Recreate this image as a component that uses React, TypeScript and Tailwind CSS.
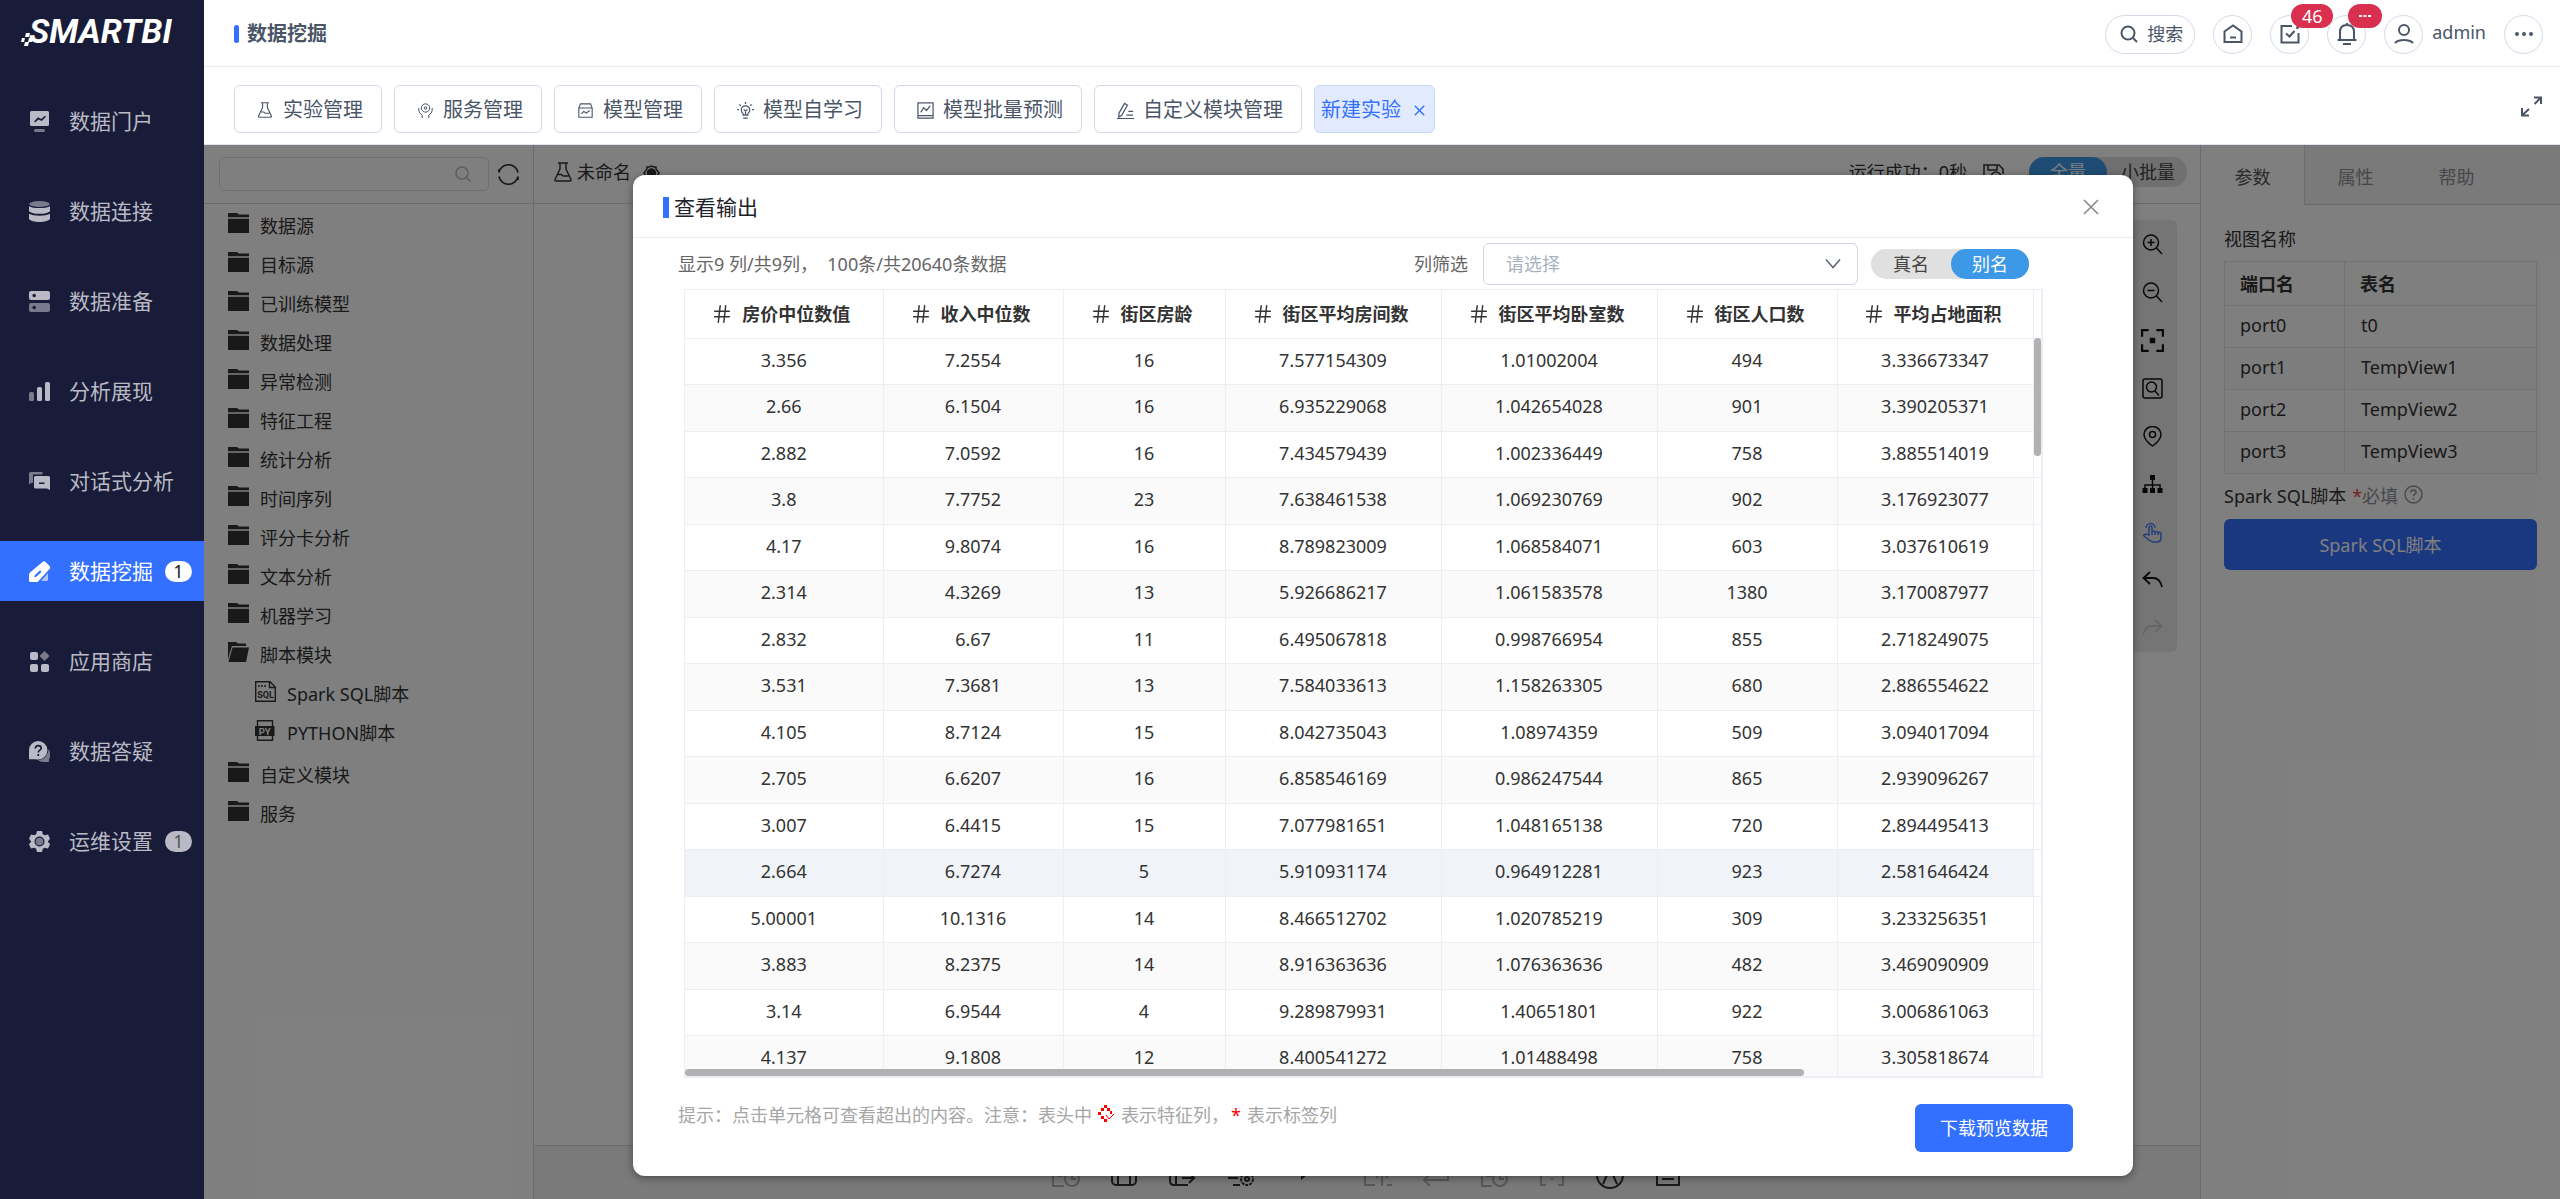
import React from "react";
import { Hash, X } from "lucide-react";

type IconProps = { children: React.ReactNode; className?: string; box?: string; sw?: number };

function Svg({ children, className = "size-[21px]", box = "0 0 21 21", sw = 1.5 }: IconProps) {
  return (
    <svg viewBox={box} className={"shrink-0 " + className} fill="none" stroke="currentColor" strokeWidth={sw} aria-hidden="true">
      {children}
    </svg>
  );
}

function Solid({ children }: { children: React.ReactNode }) {
  return (
    <svg viewBox="0 0 21 21" className="size-[21px] shrink-0" fill="currentColor" aria-hidden="true">
      {children}
    </svg>
  );
}

const navItems: { label: string; icon: React.ReactNode; badge?: string; active?: boolean }[] = [
  {
    label: "数据门户",
    icon: (
      <Solid>
        <path fillRule="evenodd" d="M2.500 0h16Q20 0 20 1.500v12Q20 15 18.500 15h-16Q1 15 1 13.500v-12Q1 0 2.500 0ZM5 10.600l1.300.7 3.200-2.800 3.200 1.500 4.300-4.200-1-1.100-3.800 3.200-3.200-1.600Z" />
        <rect x="5" y="18" width="11" height="3" rx="1.500" opacity=".6" />
      </Solid>
    ),
  },
  {
    label: "数据连接",
    icon: (
      <Solid>
        <ellipse cx="10.500" cy="3" rx="10.300" ry="3" opacity=".6" />
        <path d="M0 5.200c4 2.500 17 2.500 21 0v5c-3 3.400-18 3.400-21 0Z" />
        <path d="M0 12.800c4 2.500 17 2.500 21 0V18c-3 4-18 4-21 0Z" />
      </Solid>
    ),
  },
  {
    label: "数据准备",
    icon: (
      <Solid>
        <path fillRule="evenodd" d="M2 0h17q2 0 2 2v5q0 2-2 2H2Q0 9 0 7V2q0-2 2-2Zm3.200 2.700a1.800 1.800 0 1 0 0 3.600 1.800 1.800 0 0 0 0-3.600Z" />
        <path opacity=".6" fillRule="evenodd" d="M2 12h17q2 0 2 2v5q0 2-2 2H2q-2 0-2-2v-5q0-2 2-2Zm3.200 2.700a1.800 1.800 0 1 0 0 3.600 1.800 1.800 0 0 0 0-3.600Z" />
      </Solid>
    ),
  },
  {
    label: "分析展现",
    icon: (
      <Solid>
        <rect x="0" y="11" width="5" height="9" rx="1.500" opacity=".6" />
        <rect x="8" y="6" width="5" height="14" rx="1.500" />
        <rect x="16" y="1" width="5" height="19" rx="1.500" />
      </Solid>
    ),
  },
  {
    label: "对话式分析",
    icon: (
      <Solid>
        <path opacity=".6" d="M1.500 1h12v2.500H4V12H2L0 13.500V2.500Q0 1 1.500 1Z" />
        <path fillRule="evenodd" d="M6.500 5h13Q21 5 21 6.500V19l-3-1.500H6.500Q5 17.500 5 16V6.500Q5 5 6.500 5ZM10 11.500V13h5.500v-1.500Z" />
      </Solid>
    ),
  },
  {
    label: "数据挖掘",
    badge: "1",
    active: true,
    icon: (
      <Solid>
        <path fillRule="evenodd" d="M13.500 1q1.500-1.500 3 0l3.800 3.800q1.400 1.500.2 3.200L10 19.500Q9 21 7.500 21H1.500Q0 21 0 19.500V14q0-1.500 1-2.500Zm-2.800 8.600-5 4.800q-1 1.600.2 1.700 1 .1 2-.8l3.900-3.800q1-2-1.100-1.900Z" />
        <path opacity=".6" d="M19 12v6.500q0 1.500-1.500 1.500H12Z" />
      </Solid>
    ),
  },
  {
    label: "应用商店",
    icon: (
      <Solid>
        <rect x="1" y="1" width="8" height="8" rx="2" />
        <path opacity=".6" d="m15.500 0 5 5-5 5-5-5Z" />
        <rect x="1" y="13" width="8" height="8" rx="2" />
        <rect x="12" y="13" width="8" height="8" rx="2" />
      </Solid>
    ),
  },
  {
    label: "数据答疑",
    icon: (
      <Solid>
        <circle cx="9.200" cy="9.200" r="9.200" />
        <path d="M0 10v8.200h9Z" />
        <path opacity=".6" d="M19.800 8q2.700 6 0 11l.4 2H14q-3 0-5-1.700Q18.500 18 19.800 8Z" />
        <path d="M6.300 7.500Q6.500 4.700 9.300 4.700t2.900 2.500c0 2-2.900 2-2.900 4.300M9.300 13v2" fill="none" stroke="#191c38" strokeWidth="1.700" />
      </Solid>
    ),
  },
  {
    label: "运维设置",
    badge: "1",
    icon: (
      <Solid>
        <path fillRule="evenodd" d="M8 0h5l.8 3.200 2 1.100L19 3.400l2 4.300-2.200 2.800L21 13.300l-2 4.300-3.200-.9-2 1.100L13 21H8l-.8-3.200-2-1.100-3.200.9-2-4.300 2.200-2.800L0 7.700l2-4.300 3.200.9 2-1.100Zm2.500 5.500a5 5 0 1 0 0 10 5 5 0 0 0 0-10Z" />
        <circle cx="10.500" cy="10.500" r="3.800" opacity=".6" />
      </Solid>
    ),
  },
];

function Flask({ className }: { className: string }) {
  return (
    <Svg className={className} box="0 0 18 20" sw={1.400}>
      <path d="M4 1h10M6 1v6L1 17.500q-.4 1.500 1 1.500h14q1.400 0 1-1.500L12 7V1M3.500 12.500h4q1.500 2 3 1.500h4" />
    </Svg>
  );
}

const tabs: { label: string; icon: React.ReactNode }[] = [
  { label: "实验管理", icon: <Flask className="size-4" /> },
  {
    label: "服务管理",
    icon: (
      <Svg className="size-[15px]" box="0 0 18 18" sw={1.200}>
        <circle cx="9" cy="6" r="5" />
        <circle cx="9" cy="6" r="1.500" />
        <path d="M1 6v3q0 3 4 5.500V18M17 6v3q0 3-4 5.500V18" />
      </Svg>
    ),
  },
  {
    label: "模型管理",
    icon: (
      <Svg className="size-[15px]" box="0 0 18 18" sw={1.300}>
        <path d="M1 6 3 1h12l2 5v11H1ZM1 6h16M4 13l3-3 3 2 4-3" />
      </Svg>
    ),
  },
  {
    label: "模型自学习",
    icon: (
      <Svg className="size-[17px]" box="0 0 18 18" sw={1.300}>
        <path d="M6.500 12.500Q4.500 11 4.500 8.500a4.500 4.500 0 0 1 9 0q0 2.500-2 4V14h-5ZM6.500 17h5M9 0v2M0 8h2M16 8h2M2.500 2.500 4 4M15.500 2.500 14 4M9 14V9M7 8l2 1.500L11 8" />
      </Svg>
    ),
  },
  {
    label: "模型批量预测",
    icon: (
      <Svg className="size-[17px]" box="0 0 18 18" sw={1.300}>
        <path d="M1 1h16v16H1ZM1 14.500h16M4 11l3-5 3 3 4-5" />
      </Svg>
    ),
  },
  {
    label: "自定义模块管理",
    icon: (
      <Svg className="size-[17px]" box="0 0 18 18" sw={1.300}>
        <path d="M2 12 8 1.500l3 2L5 14l-3 2ZM0 17.500h18M12 10h5M10 14h7" />
      </Svg>
    ),
  },
];

function Folder({ open }: { open?: boolean }) {
  return (
    <svg viewBox="0 0 21 20" className="h-5 w-[21px] shrink-0" fill="currentColor" aria-hidden="true">
      {open ? (
        <path d="M0 0h8l2 1.500h8V4H4L1.500 12 0 18ZM4.500 5.500H21L18 20H0.500Z" />
      ) : (
        <path d="M0 0h9l2 1.500h10v2.800H0ZM0 5.800h21V20H0Z" />
      )}
    </svg>
  );
}

const folders = ["数据源", "目标源", "已训练模型", "数据处理", "异常检测", "特征工程", "统计分析", "时间序列", "评分卡分析", "文本分析", "机器学习"];

const columns = ["房价中位数值", "收入中位数", "街区房龄", "街区平均房间数", "街区平均卧室数", "街区人口数", "平均占地面积"];

const rows = [
  ["3.356", "7.2554", "16", "7.577154309", "1.01002004", "494", "3.336673347"],
  ["2.66", "6.1504", "16", "6.935229068", "1.042654028", "901", "3.390205371"],
  ["2.882", "7.0592", "16", "7.434579439", "1.002336449", "758", "3.885514019"],
  ["3.8", "7.7752", "23", "7.638461538", "1.069230769", "902", "3.176923077"],
  ["4.17", "9.8074", "16", "8.789823009", "1.068584071", "603", "3.037610619"],
  ["2.314", "4.3269", "13", "5.926686217", "1.061583578", "1380", "3.170087977"],
  ["2.832", "6.67", "11", "6.495067818", "0.998766954", "855", "2.718249075"],
  ["3.531", "7.3681", "13", "7.584033613", "1.158263305", "680", "2.886554622"],
  ["4.105", "8.7124", "15", "8.042735043", "1.08974359", "509", "3.094017094"],
  ["2.705", "6.6207", "16", "6.858546169", "0.986247544", "865", "2.939096267"],
  ["3.007", "6.4415", "15", "7.077981651", "1.048165138", "720", "2.894495413"],
  ["2.664", "6.7274", "5", "5.910931174", "0.964912281", "923", "2.581646424"],
  ["5.00001", "10.1316", "14", "8.466512702", "1.020785219", "309", "3.233256351"],
  ["3.883", "8.2375", "14", "8.916363636", "1.076363636", "482", "3.469090909"],
  ["3.14", "6.9544", "4", "9.289879931", "1.40651801", "922", "3.006861063"],
  ["4.137", "9.1808", "12", "8.400541272", "1.01488498", "758", "3.305818674"],
];

const ports = [
  ["port0", "t0"],
  ["port1", "TempView1"],
  ["port2", "TempView2"],
  ["port3", "TempView3"],
];

function Sidebar() {
  return (
    <aside className="flex w-[204px] shrink-0 flex-col bg-[#191c38] text-[#b9bac5]">
      <a href="#home" aria-label="SMARTBI" className="flex h-[61px] items-center pl-[21px] text-white">
        <svg viewBox="0 0 12 14" className="-mr-1 mt-[18px] h-3.5 w-3 shrink-0" fill="currentColor" aria-hidden="true">
          <path d="M5 0h4L8 4H4ZM1 5h3l-1 4H0ZM8 5h4l-1 4H7ZM4 9h4l-1 4H3Z" />
        </svg>
        <span className="font-[Roboto] text-[34px] leading-[36px] font-bold italic">SMARTBI</span>
      </a>
      <nav className="mt-[30px] flex flex-col gap-[30px]">
        {navItems.map((n) => (
          <a
            key={n.label}
            href={"#" + n.label}
            className={"flex h-[60px] items-center pl-[29px] " + (n.active ? "bg-[#3370ff] text-white" : "")}
          >
            {n.icon}
            <span className="ml-[19px] text-[21px] leading-[30px] whitespace-nowrap">{n.label}</span>
            {n.badge && (
              <span
                className={
                  "ml-3 flex h-[21px] w-[27px] items-center justify-center rounded-full text-lg leading-[21px] " +
                  (n.active ? "bg-white text-[#222]" : "bg-[#b9bac5] text-[#555]")
                }
              >
                {n.badge}
              </span>
            )}
          </a>
        ))}
      </nav>
    </aside>
  );
}

const round = "relative flex size-[39px] shrink-0 items-center justify-center rounded-full border border-[#d6d8ea]";
const badge = "absolute flex h-6 items-center justify-center rounded-full bg-[#d9304f] text-lg leading-6 text-white";

function Header() {
  return (
    <header className="flex h-[67px] shrink-0 items-center border-b border-[#e6e8f2] pt-0.5 pr-[17px] pl-[30px] text-[#4a5568]">
      <span className="h-[18px] w-[5px] rounded-sm bg-[#3370ff]" />
      <h1 className="ml-2 text-xl leading-7 font-bold">数据挖掘</h1>
      <div className="ml-auto flex items-center gap-[18px]">
        <button className="flex h-[39px] w-[90px] items-center gap-[9px] rounded-full border border-[#d6d8ea] pl-3.5 text-lg whitespace-nowrap">
          <Svg className="size-[18px]" box="0 0 18 18" sw={2}>
            <circle cx="8" cy="8" r="6.500" />
            <path d="m13 13 4 4" />
          </Svg>
          搜索
        </button>
        <button className={round} aria-label="首页">
          <Svg className="size-5" box="0 0 20 20" sw={2}>
            <path d="M1.500 7.500 10 1.500l8.500 6V18h-17ZM7 13.500h6" />
          </Svg>
        </button>
        <button className={round} aria-label="待办">
          <Svg className="size-5" box="0 0 20 20" sw={2}>
            <path d="M12 2H1.500v16.500h17V9M6 9.500l3.500 3 5-5.500" />
            <circle cx="17.500" cy="3.500" r="1.500" fill="currentColor" stroke="none" />
          </Svg>
          <span className={badge + " -top-3 left-5 w-[42px]"}>46</span>
        </button>
        <button className={round} aria-label="通知">
          <Svg className="size-[22px]" box="0 0 22 22" sw={2}>
            <path d="M1.500 17h19M4 17V9q0-7 7-7t7 7v8M7 21h8M11 0v2" />
          </Svg>
          <span className={badge + " -top-3 left-5 w-[34px]"}>
            <svg viewBox="0 0 12 4" className="h-1 w-3" fill="currentColor" aria-hidden="true">
              <path d="M0 1h3v2H0ZM4.500 1h3v2h-3ZM9 1h3v2H9Z" />
            </svg>
          </span>
        </button>
        <div className="flex items-center gap-[9px]">
          <button className={round} aria-label="用户">
            <Svg className="size-5" box="0 0 20 20" sw={2}>
              <circle cx="10" cy="6" r="5" />
              <path d="M1 19q3-3 9-3t9 3" />
            </Svg>
          </button>
          <span className="pb-1 text-lg leading-6">admin</span>
        </div>
        <button className={round} aria-label="更多">
          <Svg className="h-1 w-[18px]" box="0 0 18 4">
            <path d="M2 0a2 2 0 1 0 0 4 2 2 0 0 0 0-4ZM9 0a2 2 0 1 0 0 4 2 2 0 0 0 0-4ZM16 0a2 2 0 1 0 0 4 2 2 0 0 0 0-4Z" fill="currentColor" stroke="none" />
          </Svg>
        </button>
      </div>
    </header>
  );
}

function TabBar() {
  return (
    <div className="flex h-[78px] shrink-0 items-start gap-3 border-b border-[#e0e3ee] pt-[18px] pr-[18px] pl-[30px] text-[#4a5568]">
      {tabs.map((t) => (
        <button key={t.label} className="flex h-12 items-center rounded-md border border-[#d6d8ea] pt-0.5 pr-[18px] pl-[22px] text-xl whitespace-nowrap">
          <span className="mr-2.5 flex w-4 justify-center">{t.icon}</span>
          {t.label}
        </button>
      ))}
      <button className="flex h-12 items-center gap-2.5 rounded-md border border-[#c6dafc] bg-[#e1eaff] px-1.5 pt-0.5 text-xl whitespace-nowrap text-[#3370ff]">
        新建实验
        <X size={17} strokeWidth={2} />
      </button>
      <button className="mt-[11px] ml-auto text-[#4a5568]" aria-label="全屏">
        <Svg sw={2}>
          <path d="M13 1.500h7V8M20 1.500 13.500 8M1 12v7.500h7M1.500 19 8 13" />
        </Svg>
      </button>
    </div>
  );
}

function TreeRow({ icon, label, child }: { icon: React.ReactNode; label: string; child?: boolean }) {
  return (
    <li className={"flex h-[39px] items-center gap-[11px] text-lg whitespace-nowrap " + (child ? "pl-[51px]" : "pl-6")}>
      <span className="mb-[5px]">{icon}</span>
      {label}
    </li>
  );
}

function ResourcePanel() {
  return (
    <section className="flex w-[330px] shrink-0 flex-col border-r border-[#d4d6dc] text-[#333]">
      <div className="flex h-[59px] shrink-0 items-center border-b border-[#d4d6dc] pl-[15px]">
        <label className="flex h-[34px] w-[270px] items-center rounded-md border border-[#dadce6] pr-[17px] text-[#b8bac4]">
          <input aria-label="搜索节点" className="min-w-0 flex-1 bg-transparent px-3 text-lg outline-none" />
          <Svg className="size-4" box="0 0 16 16">
            <circle cx="7" cy="7" r="6" />
            <path d="m11.500 11.500 4 4" />
          </Svg>
        </label>
        <button className="ml-[9px]" aria-label="刷新">
          <Svg sw={1.700}>
            <path d="M1 8.500a9.700 9.700 0 0 1 19 0M20 12.500a9.700 9.700 0 0 1-19 0M1 5v3.500M20 16v-3.500" />
          </Svg>
        </button>
      </div>
      <ul className="pt-0.5">
        {folders.map((f) => (
          <TreeRow key={f} icon={<Folder />} label={f} />
        ))}
        <TreeRow icon={<Folder open />} label="脚本模块" />
        <TreeRow
          child
          label="Spark SQL脚本"
          icon={
            <Svg sw={1.400}>
              <path d="M.7.700H15L20.300 6v14.300H.7ZM14.500 1v5.500H20M3 5h2M6 5h2M9 5h2" />
              <text x="10.500" y="16.500" textAnchor="middle" fontSize="9" fontWeight="700" fontFamily="Roboto" fill="currentColor" stroke="none">SQL</text>
            </Svg>
          }
        />
        <TreeRow
          child
          label="PYTHON脚本"
          icon={
            <Svg sw={1.400}>
              <path d="M2.500 6V.700h15V6M2.500 15v5.300h15V15" />
              <rect x="0" y="6" width="19.500" height="10" fill="currentColor" stroke="none" />
              <text x="9.700" y="14.500" textAnchor="middle" fontSize="9.500" fontWeight="700" fontFamily="Roboto" fill="#fff" stroke="none">PY</text>
            </Svg>
          }
        />
        <li className="h-[3px]" />
        <TreeRow icon={<Folder />} label="自定义模块" />
        <TreeRow icon={<Folder />} label="服务" />
      </ul>
    </section>
  );
}

const sideTools: { name: string; icon: React.ReactNode; tone?: string }[] = [
  { name: "放大", icon: <Svg><circle cx="9" cy="8.500" r="7.500" /><path d="m14.500 14 5.500 6M5.500 8.500h7M9 5v7" /></Svg> },
  { name: "缩小", icon: <Svg><circle cx="9" cy="8.500" r="7.500" /><path d="m14.500 14 5.500 6M5.500 8.500h7" /></Svg> },
  { name: "适应画布", icon: <Svg className="size-[23px]" sw={2}><path d="M1 7V1h6M14 1h6v6M20 14v6h-6M7 20H1v-6" /><rect x="8" y="8" width="5" height="5" fill="currentColor" stroke="none" /></Svg> },
  { name: "查找", icon: <Svg><rect x="1" y="1" width="19" height="19" rx="2" /><circle cx="9.500" cy="9" r="5" /><path d="m13 13 4 4.500" /></Svg> },
  { name: "定位", icon: <Svg><path d="M10.500 20Q2 14 2 8.500a8.500 8 0 0 1 17 0q0 5.500-8.500 11.500Z" /><circle cx="10.500" cy="8.500" r="3" /></Svg> },
  { name: "布局", icon: <Svg><path d="M10.500 3v12M3 16v-5h15v5" /><path d="M8 1h5v5H8ZM.5 14h5v5h-5ZM8 14h5v5H8ZM15.500 14h5v5h-5Z" fill="currentColor" stroke="none" /></Svg> },
  { name: "拖动", tone: "text-[#4a7df5]", icon: <Svg><path d="M7 13V5q1.500-2 3 0v5q1.500-1.500 3 0 1.500-1 3 .5 2-.5 3 1V17q-1 3-4 3h-4Q8 19.500 1.500 13.500 3 11.500 7 13ZM10 9v4M13 10v3M16 10.500V13M4 6a4.500 4.500 0 0 1 9 0" /></Svg> },
  { name: "撤销", icon: <Svg sw={1.800}><path d="M8 2 1.500 8 8 14M1.500 8H11q7 0 9 9" /></Svg> },
  { name: "重做", tone: "text-[#c9cad0]", icon: <Svg sw={1.800}><path d="m13 2 6.500 6L13 14M19.500 8H10Q3 8 1 17" /></Svg> },
];

const thick = 2;
const bottomTools: { name: string; icon: React.ReactNode; cls: string }[] = [
  { name: "定时", cls: "text-[#b0b0b0]", icon: <Svg className="size-7" box="0 0 28 28" sw={thick}><path d="M12 25H1V3h14v6M5 15h6" /><circle cx="20" cy="18" r="7" /><path d="M20 14v4h4" /></Svg> },
  { name: "复制", cls: "text-[#333]", icon: <Svg className="size-7" box="0 0 28 28" sw={thick}><rect x="2" y="3" width="24" height="21" rx="4" /><path d="M8 3v21M20 3v21" /></Svg> },
  { name: "导出", cls: "text-[#333]", icon: <Svg className="size-7" box="0 0 28 28" sw={thick}><path d="M24 8V3H2v17q0 4 4 4h14M8 3v21M14 17h11M21 12l5 5-5 5" /></Svg> },
  { name: "配置", cls: "text-[#333]", icon: <Svg className="size-7" box="0 0 28 28" sw={thick}><path d="M2 3h22M2 10h10M2 17h10M7 24h7" /><circle cx="21" cy="18" r="6" strokeDasharray="3 1" /><circle cx="21" cy="18" r="2" /></Svg> },
  { name: "运行", cls: "ml-2 text-[#333]", icon: <Svg className="size-7" box="0 0 28 28"><path d="M9 2 20 10 9 19Z" fill="currentColor" stroke="none" /></Svg> },
  { name: "上传", cls: "ml-3.5 text-[#b0b0b0]", icon: <Svg className="size-7" box="0 0 28 28" sw={thick}><path d="M11 24H1V3h20v5M18 25V12M12 17l6-6 6 6M23 24h5" /></Svg> },
  { name: "返回", cls: "text-[#b0b0b0]", icon: <Svg className="size-7" box="0 0 28 28" sw={thick}><path d="M26 12v7H2M8 13l-6 6 6 6" /></Svg> },
  { name: "历史", cls: "text-[#b0b0b0]", icon: <Svg className="size-7" box="0 0 28 28" sw={thick}><path d="M12 25H2V3h14v6M6 15h6" /><circle cx="20" cy="18" r="7" /><path d="M20 14v4h4" /></Svg> },
  { name: "参数", cls: "text-[#b0b0b0]", icon: <Svg className="size-7" box="0 0 28 28" sw={thick}><path d="M8 3H3v21h5M20 3h5v21h-5M13 18h2" /></Svg> },
  { name: "监控", cls: "text-[#333]", icon: <Svg className="size-[30px]" box="0 0 30 30" sw={thick}><circle cx="15" cy="15" r="13" /><path d="m8 24 7-16 7 16" /></Svg> },
  { name: "日志", cls: "text-[#333]", icon: <Svg className="size-7" box="0 0 28 28" sw={thick}><path d="M3 3h22v21H3ZM8 11h12M8 18h12" /></Svg> },
];

const pill = "flex h-[30px] shrink-0 items-center rounded-full bg-[#e0e0e0] text-lg leading-[30px] whitespace-nowrap text-[#444]";

function Canvas() {
  return (
    <section className="relative flex min-w-0 flex-1 flex-col text-[#333]">
      <div className="flex h-[59px] shrink-0 items-center border-b border-[#d4d6dc] pr-[13px] pb-1 pl-5 text-lg whitespace-nowrap">
        <Flask className="h-5 w-[18px]" />
        <span className="ml-[5px]">未命名</span>
        <Svg className="ml-3 mt-0.5 h-4 w-[17px]" box="0 0 17 16">
          <path d="m1 8 3-4V2h2l2.500-1L11 2h2v2l3 4-3 5H4Z" />
          <circle cx="8.500" cy="8" r="4" fill="currentColor" />
        </Svg>
        <span className="ml-auto">运行成功：0秒</span>
        <Svg className="mt-1 ml-4 size-[21px]" sw={1.500}>
          <path d="M20 10V5l-4-4H1v19h8M5 1v5h9V1" />
          <circle cx="13" cy="13" r="5" />
        </Svg>
        <div className={pill + " ml-[25px]"}>
          <button className="h-[30px] w-[78px] rounded-full bg-[#3d99e8] text-white">全量</button>
          <button className="pr-3 pl-3.5">小批量</button>
        </div>
      </div>
      <div className="absolute top-[75px] right-[23px] flex w-12 flex-col rounded-md bg-[#ebebeb] text-[#111]">
        {sideTools.map((t) => (
          <button key={t.name} aria-label={t.name} className={"flex h-12 items-center justify-center pr-0.5 " + (t.tone ?? "")}>
            {t.icon}
          </button>
        ))}
      </div>
      <div className="mt-auto flex h-[54px] shrink-0 items-center justify-center gap-[30px] border-t border-[#d4d6dc] bg-[#f4f4f4] pt-1">
        {bottomTools.map((t) => (
          <button key={t.name} aria-label={t.name} className={"flex w-7 justify-center " + t.cls}>
            {t.icon}
          </button>
        ))}
      </div>
    </section>
  );
}

function PropertyPanel() {
  return (
    <section className="flex w-[360px] shrink-0 flex-col border-l border-[#d4d6dc] text-lg text-[#333]">
      <div className="flex h-[60px] shrink-0 bg-[#f4f4f4] text-[#8d8f96]" role="tablist">
        <button role="tab" aria-selected="true" className="w-[104px] border-r border-[#d4d6dc] bg-white pt-1 text-[#555]">参数</button>
        <button role="tab" aria-selected="false" className="w-[101px] border-b border-[#d4d6dc] pt-1">属性</button>
        <button role="tab" aria-selected="false" className="w-[101px] border-b border-[#d4d6dc] pt-1">帮助</button>
        <span className="flex-1 border-b border-[#d4d6dc]" />
      </div>
      <div className="flex flex-col px-[23px] pt-5">
        <h2 className="leading-7">视图名称</h2>
        <table className="mt-2 w-full table-fixed border-collapse text-left">
          <colgroup>
            <col className="w-[120px]" />
            <col />
          </colgroup>
          <thead>
            <tr className="h-11">
              <th className="border border-[#e3e5ee] px-[15px] font-bold">端口名</th>
              <th className="border border-[#e3e5ee] px-[15px] font-bold">表名</th>
            </tr>
          </thead>
          <tbody>
            {ports.map((p) => (
              <tr key={p[0]} className="h-[42px] even:bg-[#fafafa]">
                <td className="border border-[#e3e5ee] px-[15px] pb-[3px]">{p[0]}</td>
                <td className="border border-[#e3e5ee] px-4 pb-[3px]">{p[1]}</td>
              </tr>
            ))}
          </tbody>
        </table>
        <div className="mt-2 flex h-7 items-center whitespace-nowrap">
          Spark SQL脚本
          <span className="ml-1.5 text-[#f04040]">*</span>
          <span className="text-[#8d8f96]">必填</span>
          <Svg className="mb-1 ml-1.5 size-[19px] text-[#8d8f96]" box="0 0 19 19" sw={1.400}>
            <circle cx="9.500" cy="9.500" r="8.500" />
            <path d="M6.800 7.500Q7 5 9.500 5t2.600 2.300c0 1.700-2.600 2-2.600 4M9.500 13v1.500" />
          </Svg>
        </div>
        <button className="mt-[9px] h-[51px] w-full rounded-md bg-[#3370ff] text-white">Spark SQL脚本</button>
      </div>
    </section>
  );
}

function OutputDialog() {
  return (
    <div
      role="dialog"
      aria-labelledby="dialog-title"
      className="flex h-full w-full max-w-[1500px] flex-col rounded-xl bg-white text-lg text-[#666] shadow-[0_2px_8px_rgba(0,0,0,0.4)]"
    >
      <div className="flex h-[63px] shrink-0 items-center border-b border-[#ebedf2] pt-0.5 pr-[34px] pl-[30px]">
        <span className="h-[21px] w-1.5 bg-[#3370ff]" />
        <h2 id="dialog-title" className="ml-[5px] text-[21px] leading-[30px] text-[#1f2329]">查看输出</h2>
        <button className="ml-auto text-[#8a8c92]" aria-label="关闭">
          <Svg className="size-4" box="0 0 16 16" sw={1.700}>
            <path d="m1 1 14 14M15 1 1 15" />
          </Svg>
        </button>
      </div>
      <div className="flex h-[51px] shrink-0 items-center pr-[104px] pl-[45px] whitespace-nowrap">
        <p className="whitespace-pre">显示9 列/共9列，  100条/共20640条数据</p>
        <label htmlFor="column-filter" className="ml-auto">列筛选</label>
        <div className="relative ml-[15px] w-[375px]">
          <select id="column-filter" className="h-[42px] w-full appearance-none rounded-md border border-[#d0d3e4] bg-white px-[22px] text-lg text-[#a9b2c0]">
            <option>请选择</option>
          </select>
          <Svg className="pointer-events-none absolute top-[15px] right-[17px] h-[11px] w-4 text-[#5c6675]" box="0 0 16 11">
            <path d="m1 1.500 7 8 7-8" />
          </Svg>
        </div>
        <div className={pill + " ml-[13px]"}>
          <button className="w-20">真名</button>
          <button className="h-[30px] w-[78px] rounded-full bg-[#3d99e8] text-white">别名</button>
        </div>
      </div>
      <div className="relative mr-[90px] ml-[51px] min-h-0 flex-1 overflow-hidden border-2 border-t border-l border-[#ebeef5]">
        <table className="w-full table-fixed border-collapse text-center text-[#333]">
          <colgroup>
            <col className="w-[198px]" />
            <col className="w-[180px]" />
            <col className="w-[162px]" />
            <col className="w-[216px]" />
            <col className="w-[216px]" />
            <col className="w-[180px]" />
            <col />
            <col className="w-2" />
          </colgroup>
          <thead>
            <tr className="h-12">
              {columns.map((c) => (
                <th key={c} className="border-r border-b border-[#ebeef5] p-0 font-bold whitespace-nowrap">
                  <span className="flex items-center justify-center pr-1.5">
                    <Hash size={22} strokeWidth={1.600} />
                    <span className="ml-[9px]">{c}</span>
                  </span>
                </th>
              ))}
              <th className="border-b border-[#ebeef5] p-0" />
            </tr>
          </thead>
          <tbody>
            {rows.map((r, i) => (
              <tr key={r[0]} className={"odd:h-[46px] even:h-[47px] " + (i === 11 ? "bg-[#f0f4f8]" : "even:bg-[#fafafa]")}>
                {r.map((v, j) => (
                  <td key={j} className="border-r border-b border-[#ebeef5] p-0 pb-[3px]">{v}</td>
                ))}
                <td className="border-b border-[#ebeef5] bg-white p-0" />
              </tr>
            ))}
          </tbody>
        </table>
        <div className="absolute top-12 right-0 h-[118px] w-[7px] rounded-full bg-[#b1b1b1]" />
        <div className="absolute bottom-0 left-0 h-[7px] w-[1119px] rounded-full bg-[#b1b1b1]" />
      </div>
      <div className="flex h-[98px] shrink-0 items-start pr-[60px] pl-[45px]">
        <p className="mt-[23px] flex items-center leading-7 whitespace-nowrap text-[#a6a6a6]">
          提示：点击单元格可查看超出的内容。注意：表头中
          <svg viewBox="0 0 17 17" className="mr-[7px] mb-1 ml-[5px] size-[17px]" aria-hidden="true">
            <path d="M7 0h3v3H7ZM4 3h3v3H4ZM10 3h3v3h-3ZM1 7h3v3H1ZM4 11h3v3H4ZM7 14h3v3H7ZM13 6h2v3h-2Z" fill="#f00" />
            <path d="m9 10 3 4 5-5" fill="none" stroke="#f00" />
          </svg>
          表示特征列，
          <span className="mr-1.5 ml-0.5 text-[#f00]">*</span>
          表示标签列
        </p>
        <button className="mt-[26px] ml-auto h-12 rounded-md bg-[#3370ff] px-[25px] whitespace-nowrap text-white">下载预览数据</button>
      </div>
    </div>
  );
}

export default function App() {
  return (
    <div className="flex h-screen w-full overflow-hidden bg-white font-['Noto_Sans','Noto_Sans_CJK_SC',sans-serif]">
      <Sidebar />
      <div className="flex min-w-0 flex-1 flex-col">
        <Header />
        <TabBar />
        <main className="relative flex min-h-0 flex-1">
          <ResourcePanel />
          <Canvas />
          <PropertyPanel />
          <div className="absolute inset-0 flex justify-center bg-black/50 pt-[30px] pb-[23px] pl-0.5">
            <OutputDialog />
          </div>
        </main>
      </div>
    </div>
  );
}
